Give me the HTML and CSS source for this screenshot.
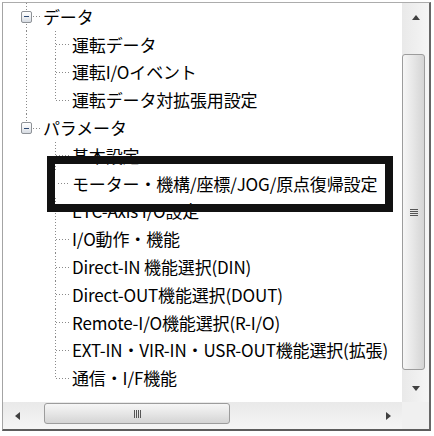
FILE: index.html
```html
<!DOCTYPE html>
<html lang="ja">
<head>
<meta charset="utf-8">
<title>Tree</title>
<link rel="stylesheet" href="styles.css">
</head>
<body>
<div class="frame">
  <div class="view">
    <div class="tree">
      <div class="row"><span class="cell root-tee"><span class="exp"></span></span><span class="label">データ</span></div>
      <div class="row"><span class="cell pipe"></span><span class="cell tee"></span><span class="label">運転データ</span></div>
      <div class="row"><span class="cell pipe"></span><span class="cell tee"></span><span class="label">運転I/Oイベント</span></div>
      <div class="row"><span class="cell pipe"></span><span class="cell elbow"></span><span class="label">運転データ対拡張用設定</span></div>
      <div class="row"><span class="cell root-elbow"><span class="exp"></span></span><span class="label">パラメータ</span></div>
      <div class="row"><span class="cell"></span><span class="cell tee"></span><span class="label">基本設定</span></div>
      <div class="row callout"><span class="cell"></span><span class="cell dash"></span><span class="label">モーター・機構/座標/JOG/原点復帰設定</span></div>
      <div class="row"><span class="cell"></span><span class="cell tee"></span><span class="label">ETC-Axis I/O設定</span></div>
      <div class="row"><span class="cell"></span><span class="cell tee"></span><span class="label">I/O動作・機能</span></div>
      <div class="row"><span class="cell"></span><span class="cell tee"></span><span class="label">Direct-IN 機能選択(DIN)</span></div>
      <div class="row"><span class="cell"></span><span class="cell tee"></span><span class="label">Direct-OUT機能選択(DOUT)</span></div>
      <div class="row"><span class="cell"></span><span class="cell tee"></span><span class="label">Remote-I/O機能選択(R-I/O)</span></div>
      <div class="row"><span class="cell"></span><span class="cell tee"></span><span class="label">EXT-IN・VIR-IN・USR-OUT機能選択(拡張)</span></div>
      <div class="row"><span class="cell"></span><span class="cell elbow"></span><span class="label">通信・I/F機能</span></div>
    </div>

    <div class="vscroll">
      <div class="btn"><svg width="8" height="6" viewBox="0 0 8 6"><path d="M0 6L4 1L8 6Z" fill="#404040"/></svg></div>
      <div class="track-top"></div>
      <div class="vthumb">
        <svg width="8" height="8" viewBox="0 0 8 8"><path d="M0 1.5h8M0 3.5h8M0 5.5h8M0 7.5h8" stroke="#555" stroke-width="1"/></svg>
      </div>
      <div class="track-fill"></div>
      <div class="btn"><svg width="8" height="6" viewBox="0 0 8 6"><path d="M0 0L4 5L8 0Z" fill="#404040"/></svg></div>
    </div>

    <div class="hscroll">
      <div class="btn"><svg width="6" height="8" viewBox="0 0 6 8"><path d="M6 0L1 4L6 8Z" fill="#404040"/></svg></div>
      <div class="track-left"></div>
      <div class="hthumb">
        <svg width="8" height="8" viewBox="0 0 8 8"><path d="M1.5 0v8M3.5 0v8M5.5 0v8M7.5 0v8" stroke="#555" stroke-width="1"/></svg>
      </div>
      <div class="track-fill"></div>
      <div class="btn"><svg width="6" height="8" viewBox="0 0 6 8"><path d="M0 0L5 4L0 8Z" fill="#404040"/></svg></div>
    </div>

    <div class="corner"></div>
  </div>
</div>
</body>
</html>
```

FILE: styles.css
```css
html, body {
  margin: 0;
  padding: 0;
  background: #ffffff;
}

body {
  font-family: "Noto Sans CJK JP", "Noto Sans", sans-serif;
}

.frame {
  margin: 2px 0 0 2px;
  width: 426px;
  height: 426px;
  border-top: 1px solid #acacac;
  border-left: 1px solid #a4a4a4;
  border-right: 2px solid #666666;
  border-bottom: 2px solid #5c5c5c;
}

.view {
  display: grid;
  grid-template-columns: 399px 27px;
  grid-template-rows: 399px 27px;
  width: 426px;
  height: 426px;
}

/* ---------- tree ---------- */
.tree {
  background: #ffffff;
  overflow: hidden;
  padding-left: 9px;
}

.row {
  display: flex;
  align-items: center;
  height: 27.8px;
  white-space: nowrap;
}

.cell {
  flex: none;
  width: 29px;
  height: 100%;
  display: flex;
  align-items: center;
  justify-content: center;
}

.label {
  margin-left: 2px;
  font-size: 17px;
  font-weight: 400;
  line-height: 20px;
  color: #000000;
  letter-spacing: -0.15px;
}

/* dotted connector lines drawn as backgrounds */
.pipe {
  background: repeating-linear-gradient(to bottom, #8a8a8a 0 1px, transparent 1px 3px) 14px 0 / 1px 100% no-repeat;
}

.tee {
  background:
    repeating-linear-gradient(to bottom, #8a8a8a 0 1px, transparent 1px 3px) 14px 0 / 1px 100% no-repeat,
    repeating-linear-gradient(to right, #8a8a8a 0 1px, transparent 1px 3px) 15px 50% / 14px 1px no-repeat;
}

.elbow {
  background:
    repeating-linear-gradient(to bottom, #8a8a8a 0 1px, transparent 1px 3px) 14px 0 / 1px 50% no-repeat,
    repeating-linear-gradient(to right, #8a8a8a 0 1px, transparent 1px 3px) 15px 50% / 14px 1px no-repeat;
}

.dash {
  background: repeating-linear-gradient(to right, #8a8a8a 0 1px, transparent 1px 3px) 17px 50% / 12px 1px no-repeat;
}

.root-tee {
  background:
    repeating-linear-gradient(to bottom, #8a8a8a 0 1px, transparent 1px 3px) 14px 0 / 1px 100% no-repeat,
    repeating-linear-gradient(to right, #8a8a8a 0 1px, transparent 1px 3px) 21px 50% / 8px 1px no-repeat;
}

.root-elbow {
  background:
    repeating-linear-gradient(to bottom, #8a8a8a 0 1px, transparent 1px 3px) 14px 0 / 1px 50% no-repeat,
    repeating-linear-gradient(to right, #8a8a8a 0 1px, transparent 1px 3px) 21px 50% / 8px 1px no-repeat;
}

.exp {
  width: 11px;
  height: 12px;
  box-sizing: border-box;
  border: 1px solid #8e9297;
  border-radius: 2px;
  background: linear-gradient(to bottom, #ffffff 0%, #eef0f3 50%, #d6dbe2 100%);
  display: flex;
  align-items: center;
  justify-content: center;
}

.exp::before {
  content: "";
  width: 5px;
  height: 1px;
  background: #2e4a72;
}

/* annotation frame drawn over the highlighted row */
.callout {
  position: relative;
}

.callout::after {
  content: "";
  position: absolute;
  left: 35px;
  top: -14px;
  width: 346px;
  height: 56px;
  box-sizing: border-box;
  border: 8px solid #111111;
}

/* ---------- scrollbars ---------- */
.vscroll {
  background: linear-gradient(to right, #e9e9e9, #f5f5f5);
  display: flex;
  flex-direction: column;
}

.hscroll {
  background: linear-gradient(to bottom, #e9e9e9, #f5f5f5);
  display: flex;
  flex-direction: row;
}

.btn {
  flex: none;
  width: 27px;
  height: 27px;
  display: flex;
  align-items: center;
  justify-content: center;
}

.track-top {
  flex: none;
  height: 24px;
}

.track-left {
  flex: none;
  width: 14px;
}

.track-fill {
  flex: 1;
}

.vthumb {
  flex: none;
  height: 316px;
  margin: 0 4px 0 0;
  box-sizing: border-box;
  border: 1px solid #9c9c9c;
  border-radius: 3px;
  background: linear-gradient(to right, #f6f6f6 0%, #e6e6e6 50%, #d4d4d4 100%);
  display: flex;
  align-items: center;
  justify-content: center;
}

.hthumb {
  flex: none;
  width: 186px;
  margin: 1px 0 5px 0;
  box-sizing: border-box;
  border: 1px solid #9c9c9c;
  border-radius: 3px;
  background: linear-gradient(to bottom, #f6f6f6 0%, #e6e6e6 50%, #d4d4d4 100%);
  display: flex;
  align-items: center;
  justify-content: center;
}

.corner {
  background: #f0f0f0;
}
```
